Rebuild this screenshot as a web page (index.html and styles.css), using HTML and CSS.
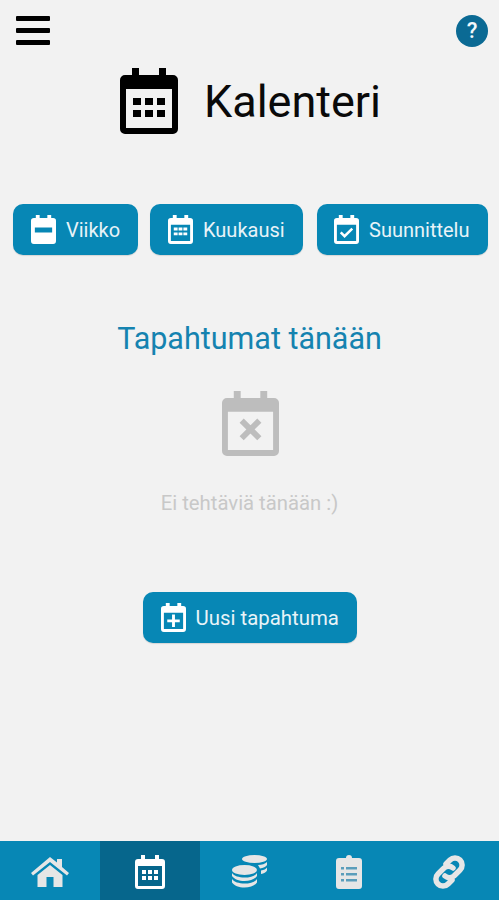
FILE: index.html
```html
<!DOCTYPE html>
<html lang="en">

<head>
    <meta charset="UTF-8">
    <meta name="viewport" content="width=device-width, initial-scale=1.0">
    <title>Kalenteri</title>
    <link rel="stylesheet" href="styles.css">
</head>

<body>
    <div class="page">
        <!-- Top bar -->
        <div class="topbar">
            <div class="menu"><span></span><span></span><span></span></div>
            <div class="help">?</div>
        </div>

        <!-- Title -->
        <div class="title">
            <svg class="title-icon" viewBox="0 0 58 66">
                <path fill="#000" fill-rule="evenodd" d="M12 0h7v7h20V0h7v7h7a5 5 0 0 1 5 5v49a5 5 0 0 1-5 5H5a5 5 0 0 1-5-5V12a5 5 0 0 1 5-5h7zM6 21v39h46V21z"/>
                <path fill="#000" d="M13 30h8v7h-8zM25 30h8v7h-8zM37 30h8v7h-8zM13 42h8v7h-8zM25 42h8v7h-8zM37 42h8v7h-8z"/>
            </svg>
            <h1>Kalenteri</h1>
        </div>

        <!-- View buttons -->
        <div class="views">
            <div class="btn btn-week">
                <svg class="btn-icon" viewBox="0 0 26 30">
                    <path fill="#fff" fill-rule="evenodd" d="M5 0h4v3h8V0h4v3h2a3 3 0 0 1 3 3v21a3 3 0 0 1-3 3H3a3 3 0 0 1-3-3V6a3 3 0 0 1 3-3h2zM4 13v5h18v-5z"/>
                </svg>
                Viikko
            </div>
            <div class="btn btn-month">
                <svg class="btn-icon" viewBox="0 0 26 30">
                    <path fill="#fff" fill-rule="evenodd" d="M5 0h4v3h8V0h4v3h2a3 3 0 0 1 3 3v21a3 3 0 0 1-3 3H3a3 3 0 0 1-3-3V6a3 3 0 0 1 3-3h2zM3 10v17h20V10z"/>
                    <path fill="#fff" d="M6 13h4v3H6zM11 13h4v3h-4zM16 13h4v3h-4zM6 18h4v3H6zM11 18h4v3h-4zM16 18h4v3h-4z"/>
                </svg>
                Kuukausi
            </div>
            <div class="btn btn-plan">
                <svg class="btn-icon" viewBox="0 0 26 30">
                    <path fill="#fff" fill-rule="evenodd" d="M5 0h4v3h8V0h4v3h2a3 3 0 0 1 3 3v21a3 3 0 0 1-3 3H3a3 3 0 0 1-3-3V6a3 3 0 0 1 3-3h2zM3 10v17h20V10z"/>
                    <path fill="none" stroke="#fff" stroke-width="2.6" d="M7 18l4 4 8-8"/>
                </svg>
                Suunnittelu
            </div>
        </div>

        <!-- Today -->
        <h2 class="today">Tapahtumat tänään</h2>
        <svg class="empty-icon" viewBox="0 0 58 66">
            <path fill="#bdbdbd" fill-rule="evenodd" d="M12 0h7v7h20V0h7v7h7a5 5 0 0 1 5 5v49a5 5 0 0 1-5 5H5a5 5 0 0 1-5-5V12a5 5 0 0 1 5-5h7zM6 21v39h46V21z"/>
            <path fill="none" stroke="#bdbdbd" stroke-width="6" d="M20 30l18 18M38 30L20 48"/>
        </svg>
        <p class="empty-text">Ei tehtäviä tänään :)</p>

        <div class="btn btn-new">
            <svg class="btn-icon" viewBox="0 0 26 30">
                <path fill="#fff" fill-rule="evenodd" d="M5 0h4v3h8V0h4v3h2a3 3 0 0 1 3 3v21a3 3 0 0 1-3 3H3a3 3 0 0 1-3-3V6a3 3 0 0 1 3-3h2zM3 10v17h20V10z"/>
                <path fill="#fff" d="M11.500 12h3v5h5v3h-5v5h-3v-5h-5v-3h5z"/>
            </svg>
            Uusi tapahtuma
        </div>
    </div>

    <!-- Bottom nav -->
    <div class="nav">
        <div class="nav-item">
            <svg class="nav-home" viewBox="0 0 38 30">
                <path fill="#e6e6e6" d="M19 0L26 5.500V2h5v8l7 6-2 2.500L19 5 2 18.500 0 16z"/>
                <path fill="#e6e6e6" d="M19 8l12.500 10v12H22.500V20h-7v10H6.500V18z"/>
            </svg>
        </div>
        <div class="nav-item active">
            <svg class="nav-cal" viewBox="0 0 30 34">
                <path fill="#fff" fill-rule="evenodd" d="M6 0h4v4h10V0h4v4h3a3 3 0 0 1 3 3v24a3 3 0 0 1-3 3H3a3 3 0 0 1-3-3V7a3 3 0 0 1 3-3h3zM3 11v20h24V11z"/>
                <path fill="#fff" d="M7 15h4v4H7zM13 15h4v4h-4zM19 15h4v4h-4zM7 21h4v4H7zM13 21h4v4h-4zM19 21h4v4h-4z"/>
            </svg>
        </div>
        <div class="nav-item">
            <svg class="nav-coins" viewBox="0 0 35 33">
                <ellipse cx="22.500" cy="4" rx="12.500" ry="4" fill="#e6e6e6"/>
                <path fill="#e6e6e6" d="M26 10c4 0 7-1 9-3v3c-1 2-4 3-7 3.500zM29 15.500c3-.5 5-1.500 6-3v3c-1 2-3 3-6 3.500z"/>
                <ellipse cx="12.500" cy="15" rx="12.500" ry="5" fill="#e6e6e6"/>
                <path fill="#e6e6e6" d="M0 18c2 3 7 4.500 12.500 4.500S23 21 25 18v3c-2 3-7 5-12.500 5S2 24 0 21zM0 24c2 3 7 4.500 12.500 4.500S23 27 25 24v3.500c-2 3-7 5-12.500 5S2 30.500 0 27.500z"/>
            </svg>
        </div>
        <div class="nav-item">
            <svg class="nav-list" viewBox="0 0 26 34">
                <path fill="#e6e6e6" fill-rule="evenodd" d="M10 3a3 3 0 0 1 6 0h7a3 3 0 0 1 3 3v25a3 3 0 0 1-3 3H3a3 3 0 0 1-3-3V6a3 3 0 0 1 3-3z"/>
                <path fill="#5a9dbb" d="M5 12h3v2.500H5zM10 12h11v2.500H10zM5 18h3v2.500H5zM10 18h11v2.500H10zM5 24h3v2.500H5zM10 24h11v2.500H10z"/>
            </svg>
        </div>
        <div class="nav-item">
            <svg class="nav-link" viewBox="0 0 34 34">
                <g fill="none" stroke="#e6e6e6" stroke-width="5.500" stroke-linecap="round">
                    <path d="M14 9l4-4a7 7 0 0 1 10 0 7 7 0 0 1 0 10l-6 6a7 7 0 0 1-9 0"/>
                    <path d="M20 25l-4 4a7 7 0 0 1-10 0 7 7 0 0 1 0-10l6-6a7 7 0 0 1 9 0"/>
                </g>
            </svg>
        </div>
    </div>
</body>

</html>
```

FILE: styles.css
```css
* {
    box-sizing: border-box;
}

html, body {
    height: 100%;
}

body {
    font-family: Roboto, "Liberation Sans", sans-serif;
    background: #f2f2f2;
    margin: 0;
    padding: 0;
    display: flex;
    flex-direction: column;
    overflow: hidden;
}

.page {
    flex: 1;
    display: flex;
    flex-direction: column;
    align-items: center;
}

.topbar {
    width: 100%;
    display: flex;
    justify-content: space-between;
    padding: 15px 11px 0 16px;
}

.menu {
    width: 34px;
    height: 31px;
    display: flex;
    flex-direction: column;
    justify-content: space-between;
    padding: 1px 0;
}

.menu span {
    height: 5px;
    border-radius: 1px;
    background: #000;
}

.help {
    width: 32px;
    height: 32px;
    border-radius: 50%;
    background: #0b6a94;
    color: #f2f8fb;
    font-size: 22px;
    font-weight: 500;
    line-height: 32px;
    text-align: center;
}

.title {
    display: flex;
    align-items: center;
    margin-top: 21px;
    margin-left: 2px;
    gap: 26px;
}

.title-icon {
    width: 58px;
    height: 66px;
}

h1 {
    margin: 0;
    font-size: 45px;
    font-weight: 400;
    color: #0a0a0a;
}

.views {
    width: 100%;
    display: flex;
    padding: 0 11px 0 13px;
    margin-top: 70px;
}

.btn {
    height: 51px;
    display: flex;
    align-items: center;
    gap: 10px;
    border-radius: 10px;
    background: #0787b5;
    color: #e8f3f8;
    font-size: 20px;
    box-shadow: 0 1px 1px rgba(0, 0, 0, 0.12);
}

.btn-week {
    width: 125px;
    padding-left: 18px;
}

.btn-month {
    width: 153px;
    padding-left: 18px;
    margin-left: 12px;
}

.btn-plan {
    width: 171px;
    padding-left: 17px;
    margin-left: 14px;
}

.btn-icon {
    width: 25px;
    height: 29px;
    flex-shrink: 0;
}

.today {
    margin: 66px 0 0;
    font-size: 30.500px;
    font-weight: 400;
    line-height: 36px;
    color: #1583b0;
}

.empty-icon {
    width: 57px;
    height: 65px;
    margin-top: 34px;
    margin-left: 2px;
}

.empty-text {
    margin: 35px 0 0;
    font-size: 20.300px;
    line-height: 24px;
    color: #c8c8c8;
}

.btn-new {
    width: 214px;
    padding-left: 18px;
    margin-top: 77px;
    font-size: 20.400px;
}

.nav {
    height: 59px;
    display: flex;
    background: #0787b5;
}

.nav-item {
    flex: 1;
    display: flex;
    align-items: center;
    justify-content: center;
    padding-top: 2px;
}

.nav-item.active {
    background: #06668c;
}

.nav-home {
    width: 38px;
    height: 30px;
}

.nav-cal {
    width: 30px;
    height: 34px;
}

.nav-coins {
    width: 35px;
    height: 33px;
}

.nav-list {
    width: 26px;
    height: 34px;
}

.nav-link {
    width: 34px;
    height: 34px;
}
```
